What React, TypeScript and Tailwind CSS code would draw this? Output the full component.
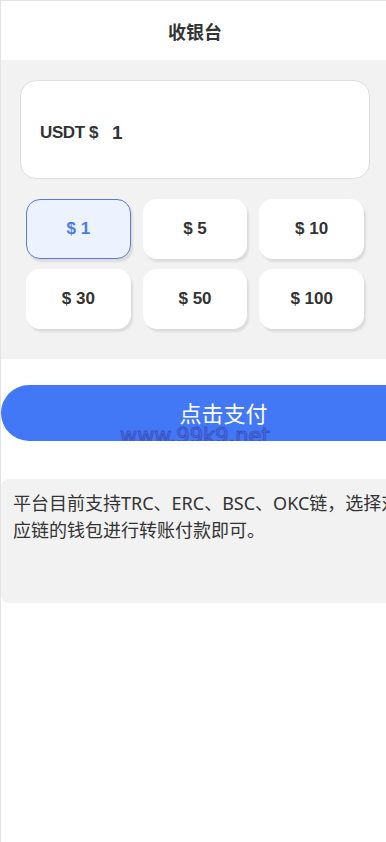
import { useState } from "react";

const amounts = [1, 5, 10, 30, 50, 100];

const cjk = "font-['Noto_Sans_CJK_SC','Noto_Sans',sans-serif]";
const latin = "font-['Liberation_Sans','Noto_Sans_CJK_SC',sans-serif]";

export default function App() {
  const [amount, setAmount] = useState(1);

  return (
    <div className={`relative min-h-screen w-[386px] overflow-hidden border-l border-t border-[#e3e3e3] bg-white text-[#333] ${cjk}`}>
      {/* Header */}
      <div className="flex h-[59px] items-center justify-center pl-[3px]">
        <h1 className="text-[18px] font-bold leading-none">收银台</h1>
      </div>

      {/* Amount section */}
      <div className="bg-[#f2f2f2] pt-[20px] pb-[30px]">
        <div className="ml-[19px] flex h-[99px] w-[350px] items-center rounded-[16px] border border-[#dedede] bg-white pl-[19px] pt-[7px]">
          <span className={`text-[17px] font-bold tracking-[-0.4px] ${latin}`}>USDT $</span>
          <span className={`ml-[14px] text-[19px] font-bold ${latin}`}>{amount}</span>
        </div>

        <div className="ml-[25px] mt-[20px] grid w-[338px] grid-cols-3 gap-x-[12px] gap-y-[10px]">
          {amounts.map((a) => {
            const active = a === amount;
            return (
              <button
                key={a}
                onClick={() => setAmount(a)}
                className={`h-[60px] rounded-[14px] text-[17px] font-bold shadow-[2px_3px_2px_#dcdcdc] ${latin} ${
                  active
                    ? "border border-[#5a7ad8] bg-[#edf3fe] text-[#4a7be8]"
                    : "bg-white text-[#333]"
                }`}
              >
                $ {a}
              </button>
            );
          })}
        </div>
      </div>

      {/* Pay button */}
      <div className="mt-[26px]">
        <button className="relative flex h-[56px] w-[445px] items-center justify-center overflow-hidden rounded-l-full bg-[#4277f5] text-[22px] text-white">
          <span className="relative -top-[1px]">点击支付</span>
          <span className="absolute left-[119px] top-[41px] font-['DejaVu_Sans',sans-serif] text-[21px] leading-none text-[#4a6ee6] [-webkit-text-stroke:1px_#3b53c2]">
            www.99k9.net
          </span>
        </button>
      </div>

      {/* Notice */}
      <div className="mt-[38px] h-[124px] w-[460px] rounded-[8px] bg-[#f2f2f2] px-[12px] pt-[11px]">
        <p className="whitespace-nowrap font-['Noto_Sans','Noto_Sans_CJK_SC',sans-serif] text-[18px] leading-[27px] text-[#333]">
          平台目前支持TRC、ERC、BSC、OKC链，选择对
          <br />
          应链的钱包进行转账付款即可。
        </p>
      </div>
    </div>
  );
}
